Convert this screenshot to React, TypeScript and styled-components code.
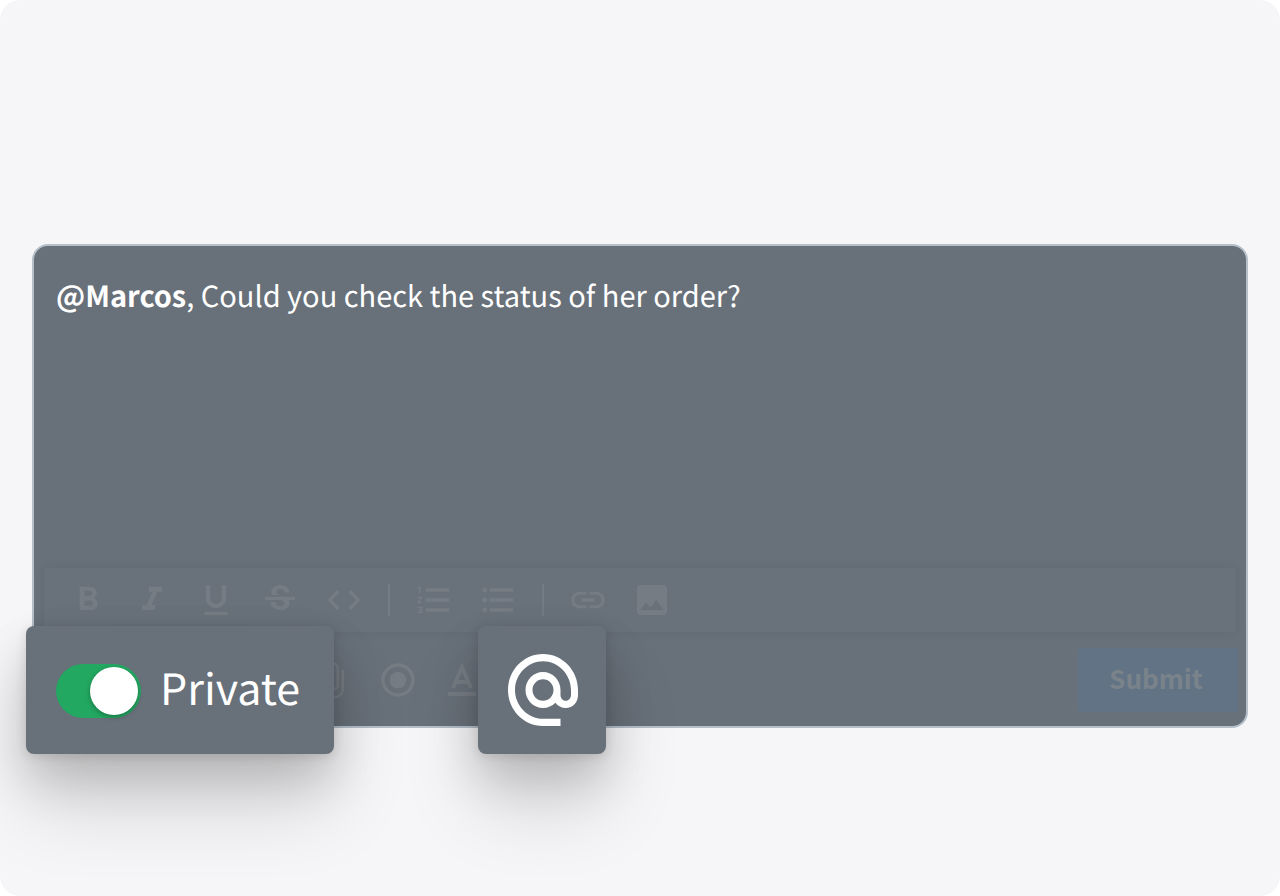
import React from "react";
import styled, { createGlobalStyle } from "styled-components";
import {
  MdAttachFile,
  MdCode,
  MdFormatBold,
  MdFormatItalic,
  MdFormatListBulleted,
  MdFormatListNumbered,
  MdFormatUnderlined,
  MdImage,
  MdLink,
  MdRadioButtonChecked,
  MdStrikethroughS,
} from "react-icons/md";

const slate = "#687079";

const GlobalStyle = createGlobalStyle`
  * { box-sizing: border-box; }
  body {
    margin: 0;
    background: #ffffff;
    font-family: "Noto Sans CJK SC", "Noto Sans", sans-serif;
    text-rendering: geometricPrecision;
  }
`;

const Page = styled.main`
  min-height: 100vh;
  padding: 244px 32px 168px;
  border-radius: 20px;
  background: #f6f6f8;
  overflow: hidden;
`;

const Composer = styled.form`
  position: relative;
  display: flex;
  flex-direction: column;
  min-height: 484px;
  padding: 24px 8px 14px;
  border: 2px solid #b4bfca;
  border-radius: 16px;
  background: ${slate};
`;

const Message = styled.p`
  flex: 1;
  margin: 0;
  padding: 5px 14px;
  color: #ffffff;
  font-size: 29px;
  line-height: 40px;
`;

const Toolbar = styled.div`
  display: flex;
  align-items: center;
  gap: 24px;
  height: 64px;
  margin: 0 2px 16px;
  padding: 0 24px;
  border-radius: 4px;
  background: #69717a;
  box-shadow: 0 0 8px rgba(60, 68, 80, 0.12);
`;

const IconButton = styled.button`
  display: flex;
  width: 40px;
  height: 40px;
  padding: 0;
  border: 0;
  background: none;
  color: #757c83;

  svg {
    width: 40px;
    height: 40px;
  }
`;

const Divider = styled.span`
  width: 2px;
  height: 32px;
  background: #737b83;
`;

const Actions = styled.div`
  display: flex;
  align-items: center;
  gap: 24px;
  padding-left: 272px;
`;

const Submit = styled.button`
  width: 160px;
  height: 64px;
  margin-left: auto;
  padding: 0 4px 4px 0;
  border: 0;
  border-radius: 4px;
  background: #627386;
  color: #7a838a;
  font: inherit;
  font-size: 26px;
  font-weight: 700;
  line-height: 40px;
`;

const raised = `
  position: absolute;
  bottom: -28px;
  display: flex;
  align-items: center;
  height: 128px;
  border: 0;
  border-radius: 8px;
  background: ${slate};
  color: #ffffff;
  box-shadow:
    0 52px 80px rgba(0, 0, 0, 0.14),
    0 24px 48px rgba(0, 0, 0, 0.16),
    0 2px 12px rgba(0, 0, 0, 0.12);
`;

const PrivateCard = styled.label`
  ${raised}
  left: -8px;
  gap: 19px;
  width: 308px;
  padding: 2px 30px 0;
  font-size: 43px;
  line-height: 56px;
`;

const PrivateText = styled.span`
  padding-bottom: 8px;
`;

const Toggle = styled.input`
  display: flex;
  align-items: center;
  justify-content: flex-start;
  flex: none;
  width: 85px;
  height: 54px;
  margin: 0;
  padding: 3px;
  appearance: none;
  border-radius: 27px;
  background: #8b939b;

  &:checked {
    justify-content: flex-end;
    background: #22a861;
  }

  &::before {
    content: "";
    width: 48px;
    height: 48px;
    border-radius: 50%;
    background: #ffffff;
    box-shadow: 0 2px 5px rgba(0, 0, 0, 0.3);
  }
`;

const MentionCard = styled.button`
  ${raised}
  left: 444px;
  justify-content: center;
  width: 128px;
  padding: 0 0 0 2px;
`;

const AtIcon = () => (
  <svg width="70" height="72" viewBox="2 1.95 20 20" preserveAspectRatio="none" fill="currentColor" aria-hidden="true">
    <path d="M12 1.95c-5.52 0-10 4.48-10 10s4.48 10 10 10h5v-2h-5c-4.34 0-8-3.66-8-8s3.66-8 8-8 8 3.66 8 8v1.43c0 .79-.71 1.57-1.5 1.57s-1.5-.78-1.5-1.57v-1.43c0-2.76-2.24-5-5-5s-5 2.24-5 5 2.24 5 5 5c1.38 0 2.64-.56 3.54-1.47.65.89 1.77 1.47 2.96 1.47 1.97 0 3.5-1.6 3.5-3.57v-1.43c0-5.52-4.48-10-10-10zm0 13c-1.66 0-3-1.34-3-3s1.34-3 3-3 3 1.34 3 3-1.34 3-3 3z" />
  </svg>
);

const TextStyleIcon = () => (
  <svg viewBox="2 1 20 20" fill="none" stroke="currentColor" strokeWidth="2" aria-hidden="true">
    <path d="M7.5 15 12 4.6 16.5 15M9 12h6M5 18h14" />
  </svg>
);

const formatTools = [
  [
    { label: "Bold", icon: <MdFormatBold /> },
    { label: "Italic", icon: <MdFormatItalic /> },
    { label: "Underline", icon: <MdFormatUnderlined /> },
    { label: "Strikethrough", icon: <MdStrikethroughS /> },
    { label: "Code", icon: <MdCode /> },
  ],
  [
    { label: "Numbered list", icon: <MdFormatListNumbered /> },
    { label: "Bulleted list", icon: <MdFormatListBulleted /> },
  ],
  [
    { label: "Link", icon: <MdLink /> },
    { label: "Image", icon: <MdImage /> },
  ],
];

const actionTools = [
  { label: "Attach file", icon: <MdAttachFile /> },
  { label: "Record", icon: <MdRadioButtonChecked /> },
  { label: "Text style", icon: <TextStyleIcon /> },
];

export default function App() {
  return (
    <>
      <GlobalStyle />
      <Page>
        <Composer onSubmit={(e) => e.preventDefault()}>
          <Message>
            <strong>@Marcos</strong>, Could you check the status of her order?
          </Message>
          <Toolbar role="toolbar" aria-label="Formatting">
            {formatTools.map((group, i) => (
              <React.Fragment key={i}>
                {i > 0 && <Divider />}
                {group.map((tool) => (
                  <IconButton key={tool.label} type="button" aria-label={tool.label}>
                    {tool.icon}
                  </IconButton>
                ))}
              </React.Fragment>
            ))}
          </Toolbar>
          <Actions>
            {actionTools.map((tool) => (
              <IconButton key={tool.label} type="button" aria-label={tool.label}>
                {tool.icon}
              </IconButton>
            ))}
            <Submit type="submit">Submit</Submit>
          </Actions>
          <PrivateCard>
            <Toggle type="checkbox" role="switch" defaultChecked />
            <PrivateText>Private</PrivateText>
          </PrivateCard>
          <MentionCard type="button" aria-label="Mention someone">
            <AtIcon />
          </MentionCard>
        </Composer>
      </Page>
    </>
  );
}
